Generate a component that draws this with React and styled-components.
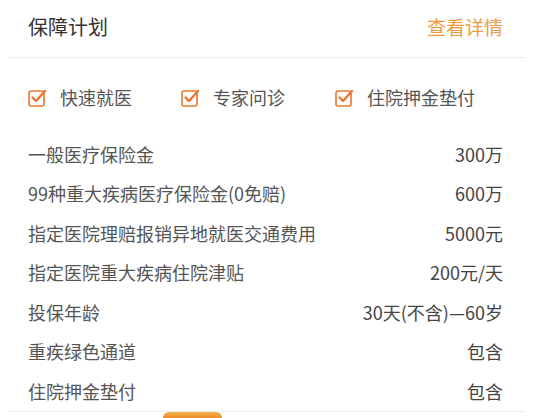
import React from "react";
import styled, { createGlobalStyle } from "styled-components";

const GlobalStyle = createGlobalStyle`
    body {
        margin: 0;
        background: #fff;
        font-family: "Noto Sans CJK SC", "Noto Sans", sans-serif;
    }
`;

const Card = styled.div`
    width: 517px;
    margin-left: 8px;
`;

const Header = styled.div`
    display: flex;
    justify-content: space-between;
    align-items: center;
    height: 58px;
    padding: 0 22px 4px 20px;
    box-sizing: border-box;
    border-bottom: 1px solid #ececec;
`;

const Title = styled.div`
    font-size: 20px;
    color: #333;
`;

const More = styled.div`
    font-size: 19px;
    color: #f09a3e;
`;

const Features = styled.div`
    display: flex;
    align-items: center;
    height: 38px;
    margin-top: 20px;
    padding-left: 20px;
`;

const Feature = styled.div`
    display: flex;
    align-items: center;
    width: ${(p) => p.w}px;
    font-size: 18px;
    line-height: 24px;
    color: #555;
`;

const Box = styled.svg`
    width: 19px;
    height: 19px;
    margin-right: 13px;
    flex-shrink: 0;
`;

const List = styled.div`
    margin-top: 18px;
    padding: 0 22px 0 20px;
    border-bottom: 1px solid #ececec;
`;

const Row = styled.div`
    display: flex;
    justify-content: space-between;
    align-items: center;
    height: 39.5px;
    font-size: 18px;
    color: #555;
`;

const Value = styled.span`
    color: #444;
`;

const Footer = styled.div`
    padding-left: 155px;
`;

const Tab = styled.div`
    width: 59px;
    height: 6px;
    border-radius: 6px 6px 0 0;
    background: linear-gradient(#f5b24c, #ee8d2a);
`;

const CheckIcon = () => (
    <Box viewBox="0 0 19 19">
        <rect x="1" y="3" width="15" height="15" rx="2" fill="none" stroke="#e8772e" strokeWidth="1.6" />
        <path d="M4.5 9.5 L8 13 L17 3" fill="none" stroke="#e8772e" strokeWidth="2.4" strokeLinecap="round" strokeLinejoin="round" />
    </Box>
);

const features = [
    { name: "快速就医", w: 153 },
    { name: "专家问诊", w: 154 },
    { name: "住院押金垫付", w: 180 },
];

const rows = [
    ["一般医疗保险金", "300万"],
    ["99种重大疾病医疗保险金(0免赔)", "600万"],
    ["指定医院理赔报销异地就医交通费用", "5000元"],
    ["指定医院重大疾病住院津贴", "200元/天"],
    ["投保年龄", "30天(不含)—60岁"],
    ["重疾绿色通道", "包含"],
    ["住院押金垫付", "包含"],
];

export default function App() {
    return (
        <>
            <GlobalStyle />
            <Card>
                <Header>
                    <Title>保障计划</Title>
                    <More>查看详情</More>
                </Header>
                <Features>
                    {features.map((f) => (
                        <Feature key={f.name} w={f.w}>
                            <CheckIcon />
                            {f.name}
                        </Feature>
                    ))}
                </Features>
                <List>
                    {rows.map(([label, value]) => (
                        <Row key={label}>
                            <span>{label}</span>
                            <Value>{value}</Value>
                        </Row>
                    ))}
                </List>
                <Footer>
                    <Tab />
                </Footer>
            </Card>
        </>
    );
}
